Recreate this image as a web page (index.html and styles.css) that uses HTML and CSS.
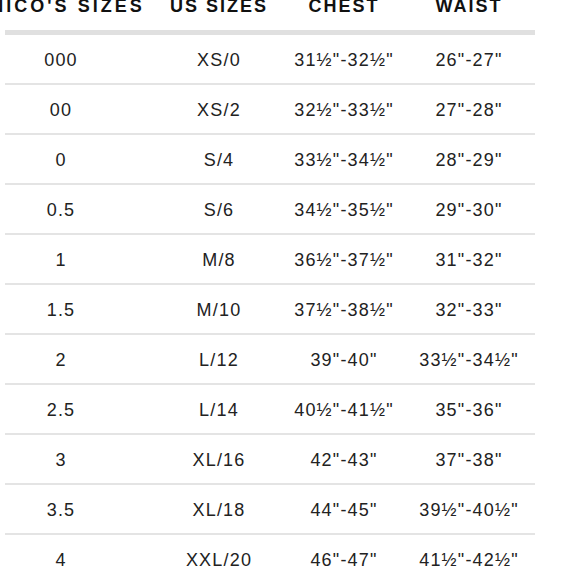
FILE: index.html
```html
<!DOCTYPE html>
<html lang="en">
<head>
<meta charset="utf-8">
<title>Size Chart</title>
<link rel="stylesheet" href="styles.css">
</head>
<body>
<div class="chart">
  <div class="row head">
    <div class="cell first brand">NICO'S SIZES</div>
    <div class="cell">US SIZES</div>
    <div class="cell">CHEST</div>
    <div class="cell">WAIST</div>
  </div>
  <div class="row"><div class="cell first">000</div><div class="cell">XS/0</div><div class="cell">31½"-32½"</div><div class="cell">26"-27"</div></div>
  <div class="row"><div class="cell first">00</div><div class="cell">XS/2</div><div class="cell">32½"-33½"</div><div class="cell">27"-28"</div></div>
  <div class="row"><div class="cell first">0</div><div class="cell">S/4</div><div class="cell">33½"-34½"</div><div class="cell">28"-29"</div></div>
  <div class="row"><div class="cell first">0.5</div><div class="cell">S/6</div><div class="cell">34½"-35½"</div><div class="cell">29"-30"</div></div>
  <div class="row"><div class="cell first">1</div><div class="cell">M/8</div><div class="cell">36½"-37½"</div><div class="cell">31"-32"</div></div>
  <div class="row"><div class="cell first">1.5</div><div class="cell">M/10</div><div class="cell">37½"-38½"</div><div class="cell">32"-33"</div></div>
  <div class="row"><div class="cell first">2</div><div class="cell">L/12</div><div class="cell">39"-40"</div><div class="cell">33½"-34½"</div></div>
  <div class="row"><div class="cell first">2.5</div><div class="cell">L/14</div><div class="cell">40½"-41½"</div><div class="cell">35"-36"</div></div>
  <div class="row"><div class="cell first">3</div><div class="cell">XL/16</div><div class="cell">42"-43"</div><div class="cell">37"-38"</div></div>
  <div class="row"><div class="cell first">3.5</div><div class="cell">XL/18</div><div class="cell">44"-45"</div><div class="cell">39½"-40½"</div></div>
  <div class="row"><div class="cell first">4</div><div class="cell">XXL/20</div><div class="cell">46"-47"</div><div class="cell">41½"-42½"</div></div>
</div>
</body>
</html>
```
FILE: styles.css
```css
html, body {
  margin: 0;
  padding: 0;
  background: #ffffff;
  overflow: hidden;
}

body {
  font-family: "Liberation Sans", Arial, sans-serif;
  color: #222222;
}

.chart {
  width: 530px;
  margin: -20px 0 0 5px;
}

.row {
  display: grid;
  grid-template-columns: 152px 124px 126px 124px;
  height: 50px;
  box-sizing: border-box;
  padding-top: 2px;
  border-bottom: 2px solid #e4e4e4;
  font-size: 18px;
  letter-spacing: 1.2px;
}

.row.head {
  padding-top: 3px;
  border-bottom: 5px solid #e0e0e0;
  font-weight: bold;
  color: #111111;
  letter-spacing: 2px;
  height: 55px;
}

.cell {
  display: flex;
  align-items: center;
  justify-content: center;
  white-space: nowrap;
}

.cell.first {
  padding-right: 40px;
}

.cell.brand {
  padding-right: 27px;
  letter-spacing: 3px;
}
```
